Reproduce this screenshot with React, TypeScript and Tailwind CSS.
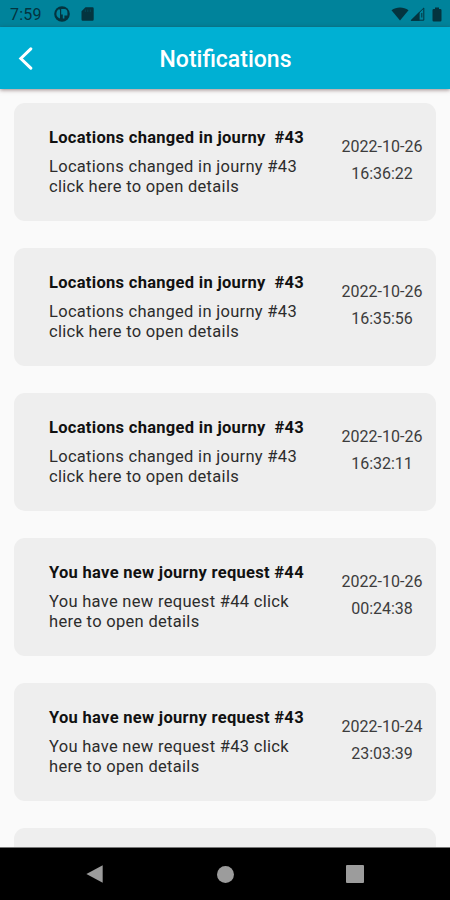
import React from 'react';

interface Notification {
  title: string;
  lines: string[];
  date: string;
  time: string;
}

const notifications: Notification[] = [
  {
    title: 'Locations changed in journy  #43',
    lines: ['Locations changed in journy #43', 'click here to open details'],
    date: '2022-10-26',
    time: '16:36:22'
  },
  {
    title: 'Locations changed in journy  #43',
    lines: ['Locations changed in journy #43', 'click here to open details'],
    date: '2022-10-26',
    time: '16:35:56'
  },
  {
    title: 'Locations changed in journy  #43',
    lines: ['Locations changed in journy #43', 'click here to open details'],
    date: '2022-10-26',
    time: '16:32:11'
  },
  {
    title: 'You have new journy request #44',
    lines: ['You have new request #44 click', 'here to open details'],
    date: '2022-10-26',
    time: '00:24:38'
  },
  {
    title: 'You have new journy request #43',
    lines: ['You have new request #43 click', 'here to open details'],
    date: '2022-10-24',
    time: '23:03:39'
  }
];

const StatusBar: React.FC = () => (
  <div className="flex h-[27px] shrink-0 items-center bg-[#00839b] pt-px pl-[10px] pr-[8px] text-[#04343f]">
    <span className="w-[44px] pt-[2px] text-[16px] leading-[24px] tracking-[0.2px]">7:59</span>
    <svg className="h-4 w-4" viewBox="0 0 16 16">
      <circle cx="8" cy="8" r="7.8" fill="currentColor" />
      <path d="M4.2 3.4H6V12.6C3.8 11.8 2.4 10.2 2.4 8C2.4 6.2 3 4.6 4.2 3.4Z" fill="#00839b" />
      <path d="M7.2 3H10.4A3.3 3.3 0 0 1 13.4 6.3V9.6H10.4V12.6H8.8V8.6H7.2Z" fill="#00839b" />
    </svg>
    <svg className="ml-[11px] h-[14px] w-[13px]" viewBox="0 0 13 14">
      <path d="M4.5 0.3H11.5A1.2 1.2 0 0 1 12.7 1.5V12.6A1.2 1.2 0 0 1 11.5 13.8H1.7A1.2 1.2 0 0 1 0.5 12.6V4.3Z" fill="currentColor" />
      <path d="M4.3 2.5V5M6.8 2.5V5M9.3 2.5V5" stroke="#00839b" strokeWidth="0.8" opacity="0.35" />
    </svg>
    <svg className="ml-auto h-[14px] w-[18px]" viewBox="0 0 18 14">
      <path d="M0.5 3.2C5.5 -0.4 12.5 -0.4 17.5 3.2L9 13.6Z" fill="currentColor" />
    </svg>
    <svg className="ml-[1px] h-[14px] w-[15px]" viewBox="0 0 15 14">
      <path d="M0.5 13.7L9.6 4.8V13.7Z" fill="currentColor" />
      <path d="M1.4 13.2L13.8 1V13.2Z" fill="none" stroke="currentColor" strokeWidth="1" />
      <path d="M11.8 6V10.5" stroke="currentColor" strokeWidth="1" />
    </svg>
    <svg className="ml-[7px] h-[15px] w-[10px]" viewBox="0 0 10 15">
      <path d="M3 0.5H7V2H8.3A1.2 1.2 0 0 1 9.5 3.2V13.3A1.2 1.2 0 0 1 8.3 14.5H1.7A1.2 1.2 0 0 1 0.5 13.3V3.2A1.2 1.2 0 0 1 1.7 2H3Z" fill="currentColor" />
    </svg>
  </div>
);

const Header: React.FC = () => (
  <header className="z-10 grid h-[62px] shrink-0 grid-cols-[60px_1fr_60px] items-center bg-[#00b0d3] shadow-[0_1px_4px_rgba(60,20,20,0.5)]">
    <button className="pl-[18px]" aria-label="Back">
      <svg className="h-[24px] w-[16px]" viewBox="0 0 16 24">
        <path d="M12.8 2.8L2.8 12.5L12.8 22.2" fill="none" stroke="white" strokeWidth="3" strokeLinecap="round" />
      </svg>
    </button>
    <h1 className="pt-[3px] pl-px text-center text-[23px] leading-[28px] font-medium text-white">Notifications</h1>
  </header>
);

const NotificationCard: React.FC<{ item: Notification }> = ({ item }) => (
  <article className="flex h-[118px] shrink-0 rounded-[11px] bg-[#eeeeee] pl-[35px]">
    <div className="w-[279px] pt-[25px] whitespace-pre">
      <h2 className="text-[16.5px] leading-[20px] font-bold tracking-[0.3px] text-[#111]">{item.title}</h2>
      <div className="mt-[9px] text-[16.5px] leading-[20px] tracking-[0.3px] text-[#2c2c2c]">
        {item.lines.map((line) => (
          <p key={line}>{line}</p>
        ))}
      </div>
    </div>
    <div className="w-[108px] pt-[30px] text-center text-[16px] leading-[27px] text-[#3c3c3c]">
      <p>{item.date}</p>
      <p>{item.time}</p>
    </div>
  </article>
);

const NavigationBar: React.FC = () => (
  <nav className="flex h-[53px] shrink-0 items-center justify-between border-t border-[#777] bg-black pr-[86px] pl-[86px] text-[#9c9c9c]">
    <svg className="h-[18px] w-[18px]" viewBox="0 0 18 18">
      <path d="M16.7 0.2V17.8L0.4 9Z" fill="currentColor" />
    </svg>
    <div className="h-[17px] w-[17px] rounded-full bg-[#9c9c9c]" />
    <div className="h-[18px] w-[18px] rounded-[1px] bg-[#9c9c9c]" />
  </nav>
);

const App: React.FC = () => (
  <div className="flex h-[900px] w-[450px] flex-col overflow-hidden bg-[#fafafa] font-['Roboto',sans-serif]">
    <StatusBar />
    <Header />
    <main className="flex min-h-0 flex-1 flex-col gap-[27px] overflow-hidden px-[14px] pt-[14px]">
      {notifications.map((item) => (
        <NotificationCard key={item.date + item.time} item={item} />
      ))}
      {/* Next card, cut off by the navigation bar */}
      <div className="h-[118px] shrink-0 rounded-[11px] bg-[#eeeeee]" />
    </main>
    <NavigationBar />
  </div>
);

export default App;
